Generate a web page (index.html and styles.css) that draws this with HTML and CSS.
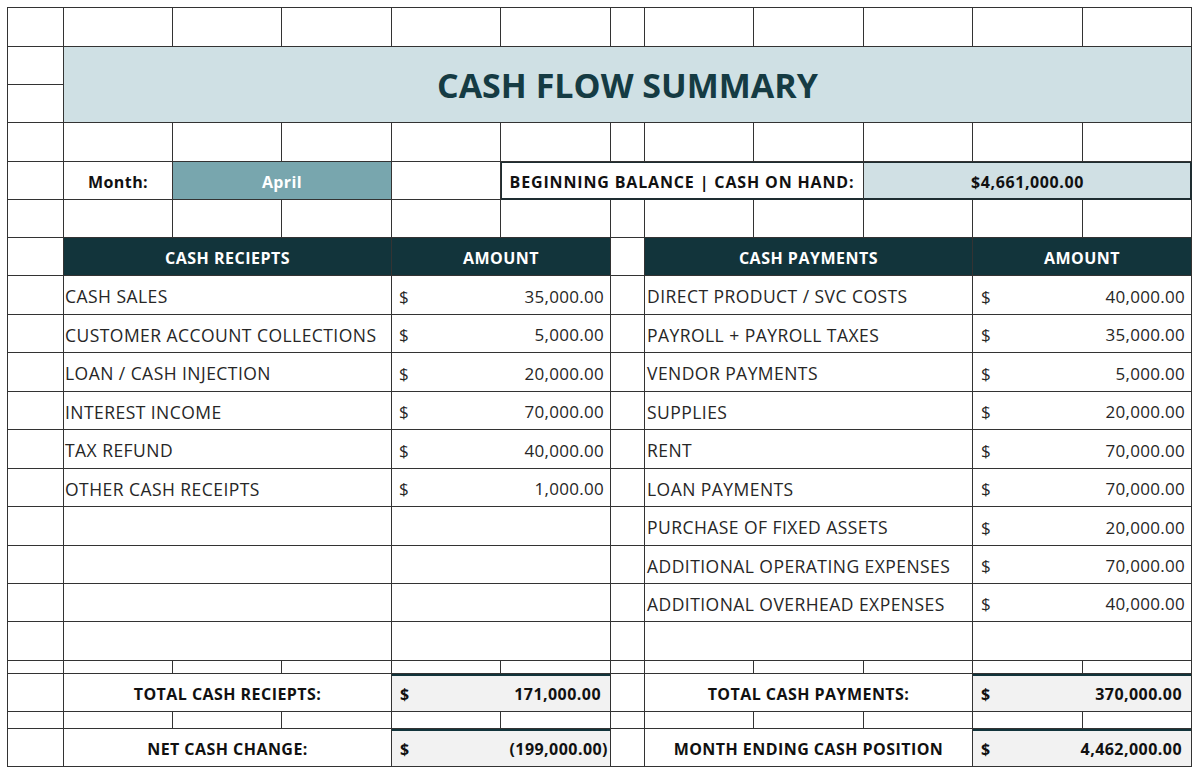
FILE: index.html
```html
<!DOCTYPE html>
<html>
<head>
<meta charset="utf-8">
<title>Cash Flow Summary</title>
<link rel="stylesheet" href="styles.css">
</head>
<body>
<div class="sheet">
  <!-- row 1 -->
  <div class="c"></div><div class="c"></div><div class="c"></div><div class="c"></div><div class="c"></div><div class="c"></div><div class="c"></div><div class="c"></div><div class="c"></div><div class="c"></div><div class="c"></div><div class="c"></div>
  <!-- rows 2-3 -->
  <div class="c"></div>
  <div class="c title">CASH FLOW SUMMARY</div>
  <div class="c"></div>
  <!-- row 4 -->
  <div class="c"></div><div class="c"></div><div class="c"></div><div class="c"></div><div class="c"></div><div class="c"></div><div class="c"></div><div class="c"></div><div class="c"></div><div class="c"></div><div class="c"></div><div class="c"></div>
  <!-- row 5 -->
  <div class="c"></div>
  <div class="c bold center">Month:</div>
  <div class="c s2 month">April</div>
  <div class="c"></div>
  <div class="c s4 bold balance-label">BEGINNING BALANCE | CASH ON HAND:</div>
  <div class="c s3 bold balance-value">$4,661,000.00</div>
  <!-- row 6 -->
  <div class="c"></div><div class="c"></div><div class="c"></div><div class="c"></div><div class="c"></div><div class="c"></div><div class="c"></div><div class="c"></div><div class="c"></div><div class="c"></div><div class="c"></div><div class="c"></div>
  <!-- row 7 header -->
  <div class="c"></div>
  <div class="c s3 head">CASH RECIEPTS</div>
  <div class="c s2 head">AMOUNT</div>
  <div class="c"></div>
  <div class="c s3 head">CASH PAYMENTS</div>
  <div class="c s2 head">AMOUNT</div>
  <!-- data rows -->
  <div class="c"></div>
  <div class="c s3 item">CASH SALES</div>
  <div class="c s2 amt"><span>$</span><span>35,000.00</span></div>
  <div class="c"></div>
  <div class="c s3 item right-item">DIRECT PRODUCT / SVC COSTS</div>
  <div class="c s2 amt amt-r"><span>$</span><span>40,000.00</span></div>

  <div class="c"></div>
  <div class="c s3 item">CUSTOMER ACCOUNT COLLECTIONS</div>
  <div class="c s2 amt"><span>$</span><span>5,000.00</span></div>
  <div class="c"></div>
  <div class="c s3 item right-item">PAYROLL + PAYROLL TAXES</div>
  <div class="c s2 amt amt-r"><span>$</span><span>35,000.00</span></div>

  <div class="c"></div>
  <div class="c s3 item">LOAN / CASH INJECTION</div>
  <div class="c s2 amt"><span>$</span><span>20,000.00</span></div>
  <div class="c"></div>
  <div class="c s3 item right-item">VENDOR PAYMENTS</div>
  <div class="c s2 amt amt-r"><span>$</span><span>5,000.00</span></div>

  <div class="c"></div>
  <div class="c s3 item">INTEREST INCOME</div>
  <div class="c s2 amt"><span>$</span><span>70,000.00</span></div>
  <div class="c"></div>
  <div class="c s3 item right-item">SUPPLIES</div>
  <div class="c s2 amt amt-r"><span>$</span><span>20,000.00</span></div>

  <div class="c"></div>
  <div class="c s3 item">TAX REFUND</div>
  <div class="c s2 amt"><span>$</span><span>40,000.00</span></div>
  <div class="c"></div>
  <div class="c s3 item right-item">RENT</div>
  <div class="c s2 amt amt-r"><span>$</span><span>70,000.00</span></div>

  <div class="c"></div>
  <div class="c s3 item">OTHER CASH RECEIPTS</div>
  <div class="c s2 amt"><span>$</span><span>1,000.00</span></div>
  <div class="c"></div>
  <div class="c s3 item right-item">LOAN PAYMENTS</div>
  <div class="c s2 amt amt-r"><span>$</span><span>70,000.00</span></div>

  <div class="c"></div>
  <div class="c s3"></div>
  <div class="c s2"></div>
  <div class="c"></div>
  <div class="c s3 item right-item">PURCHASE OF FIXED ASSETS</div>
  <div class="c s2 amt amt-r"><span>$</span><span>20,000.00</span></div>

  <div class="c"></div>
  <div class="c s3"></div>
  <div class="c s2"></div>
  <div class="c"></div>
  <div class="c s3 item right-item">ADDITIONAL OPERATING EXPENSES</div>
  <div class="c s2 amt amt-r"><span>$</span><span>70,000.00</span></div>

  <div class="c"></div>
  <div class="c s3"></div>
  <div class="c s2"></div>
  <div class="c"></div>
  <div class="c s3 item right-item">ADDITIONAL OVERHEAD EXPENSES</div>
  <div class="c s2 amt amt-r"><span>$</span><span>40,000.00</span></div>

  <div class="c"></div>
  <div class="c s3"></div>
  <div class="c s2"></div>
  <div class="c"></div>
  <div class="c s3"></div>
  <div class="c s2"></div>
  <!-- spacer row -->
  <div class="c"></div><div class="c"></div><div class="c"></div><div class="c"></div><div class="c"></div><div class="c"></div><div class="c"></div><div class="c"></div><div class="c"></div><div class="c"></div><div class="c"></div><div class="c"></div>
  <!-- totals -->
  <div class="c"></div>
  <div class="c s3 bold center">TOTAL CASH RECIEPTS:</div>
  <div class="c s2 bold tot"><span>$</span><span>171,000.00</span></div>
  <div class="c"></div>
  <div class="c s3 bold center">TOTAL CASH PAYMENTS:</div>
  <div class="c s2 bold tot tot-r"><span>$</span><span>370,000.00</span></div>
  <!-- spacer row -->
  <div class="c"></div><div class="c"></div><div class="c"></div><div class="c"></div><div class="c"></div><div class="c"></div><div class="c"></div><div class="c"></div><div class="c"></div><div class="c"></div><div class="c"></div><div class="c"></div>
  <!-- net -->
  <div class="c"></div>
  <div class="c s3 bold center">NET CASH CHANGE:</div>
  <div class="c s2 bold tot neg"><span>$</span><span>(199,000.00)</span></div>
  <div class="c"></div>
  <div class="c s3 bold center">MONTH ENDING CASH POSITION</div>
  <div class="c s2 bold tot tot-r"><span>$</span><span>4,462,000.00</span></div>
</div>
</body>
</html>
```

FILE: styles.css
```css
* { box-sizing: border-box; }

html, body {
  margin: 0;
  background: #ffffff;
}

body {
  font-family: "Open Sans", "DejaVu Sans", sans-serif;
  color: #1b1b1b;
}

.sheet {
  display: grid;
  grid-template-columns: 56px 109px 109px 110px 109px 110px 34px 109px 110px 109px 110px 109px;
  grid-template-rows: 39px 38px 38px 39px 38px 38px 38px 39px 38px 39px 38px 39px 38px 39px 38px 38px 39px 13px 38px 17px 38px;
  width: 1185px;
  margin: 7px 0 0 7px;
  border-top: 1px solid #333;
  border-left: 1px solid #333;
}

.c {
  border-right: 1px solid #333;
  border-bottom: 1px solid #333;
  display: flex;
  align-items: center;
  min-width: 0;
  white-space: nowrap;
  overflow: hidden;
}

.s2 { grid-column: span 2; }
.s3 { grid-column: span 3; }
.s4 { grid-column: span 4; }

.title {
  grid-column: span 11;
  grid-row: span 2;
  background: #cfe0e4;
  justify-content: center;
  font-weight: 700;
  font-size: 34px;
  color: #153b43;
  padding-top: 1px;
}

.bold {
  font-weight: 700;
  font-size: 16px;
  letter-spacing: 0.45px;
  color: #111;
  padding-top: 2px;
}

.center { justify-content: center; }

.month {
  background: #78a6ae;
  color: #fff;
  font-weight: 700;
  font-size: 16px;
  letter-spacing: 0.4px;
  justify-content: center;
  padding-top: 2px;
}

.balance-label {
  justify-content: center;
  letter-spacing: 0.85px;
  box-shadow: inset 1px 1px 0 #1e2d31, inset 0 -1px 0 #1e2d31;
  border-bottom-color: #1e2d31;
}

.balance-value {
  justify-content: center;
  letter-spacing: 0.6px;
  background: #d0e0e4;
  box-shadow: inset 0 1px 0 #1e2d31, inset 0 -1px 0 #1e2d31, inset -1px 0 0 #1e2d31;
  border-bottom-color: #1e2d31;
  border-right-color: #1e2d31;
}

.head {
  background: #12343b;
  color: #fff;
  font-weight: 700;
  font-size: 16px;
  letter-spacing: 0.5px;
  justify-content: center;
  padding-top: 2px;
}

.item {
  font-size: 17.5px;
  font-weight: 400;
  color: #262626;
  letter-spacing: 0.45px;
  padding-left: 1px;
  padding-top: 2px;
}

.right-item { padding-left: 2px; }

.amt {
  font-size: 17px;
  font-weight: 400;
  color: #262626;
  letter-spacing: 0.3px;
  justify-content: space-between;
  padding: 2px 6px 0 7px;
}

.amt-r { padding-left: 8px; }

.tot {
  background: #f2f2f2;
  justify-content: space-between;
  padding: 2px 9px 0 8px;
  box-shadow: inset 0 2px 0 #12343b;
}

.tot-r { padding-left: 8px; }

.neg { padding-right: 2px; }
```
